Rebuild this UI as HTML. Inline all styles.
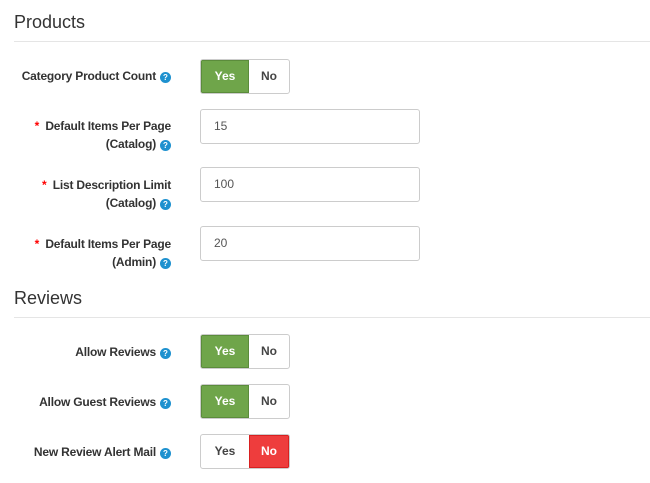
<!DOCTYPE html><html><head><style>
body{margin:0;background:#fff;font-family:"Liberation Sans",Arial,sans-serif;color:#333;width:650px;height:483px;position:relative;overflow:hidden}
.h{position:absolute;left:14px;font-size:18px;color:#333}
.hr{position:absolute;left:14px;right:0;height:1px;background:#e5e5e5}
.lab{position:absolute;right:479px;font-size:12px;font-weight:bold;text-align:right;line-height:18px;white-space:nowrap;letter-spacing:-0.2px}
.q{display:inline-block;width:11px;height:11px;border-radius:50%;background:#1e91cf;color:#fff;font-size:8px;line-height:11px;text-align:center;vertical-align:0px;margin-left:4px;letter-spacing:0}
.r{color:#f00;font-weight:bold}
.tg{position:absolute;left:200px;width:88px;height:33px;border:1px solid #ccc;border-radius:3px;overflow:hidden;display:flex;font-size:12px;font-weight:bold;color:#444}
.tg span{display:block;text-align:center;line-height:33px}
.y{width:48px}.n{width:40px}
.g{background:#6fa54a;color:#fff;box-shadow:inset 0 0 0 1px #5b8c3b}
.rd{background:#ee3d3d;color:#fff;box-shadow:inset 0 0 0 1px #d82020}
.in{position:absolute;left:200px;border:1px solid #ccc;border-radius:3px;font-size:12px;line-height:33px;padding-left:13px;box-sizing:border-box;width:220px;height:35px;color:#555}
</style></head><body>
<div class="h" style="top:12px">Products</div>
<div class="hr" style="top:41px"></div>
<div class="lab" style="top:67px">Category Product Count<span class="q">?</span></div>
<div class="tg" style="top:59px"><span class="y g">Yes</span><span class="n">No</span></div>
<div class="lab" style="top:117px"><span class="r">*</span>&nbsp; Default Items Per Page<br>(Catalog)<span class="q">?</span></div>
<div class="in" style="top:109px">15</div>
<div class="lab" style="top:176px"><span class="r">*</span>&nbsp; List Description Limit<br>(Catalog)<span class="q">?</span></div>
<div class="in" style="top:167px">100</div>
<div class="lab" style="top:235px"><span class="r">*</span>&nbsp; Default Items Per Page<br>(Admin)<span class="q">?</span></div>
<div class="in" style="top:226px">20</div>
<div class="h" style="top:288px">Reviews</div>
<div class="hr" style="top:317px"></div>
<div class="lab" style="top:343px">Allow Reviews<span class="q">?</span></div>
<div class="tg" style="top:334px"><span class="y g">Yes</span><span class="n">No</span></div>
<div class="lab" style="top:393px">Allow Guest Reviews<span class="q">?</span></div>
<div class="tg" style="top:384px"><span class="y g">Yes</span><span class="n">No</span></div>
<div class="lab" style="top:443px">New Review Alert Mail<span class="q">?</span></div>
<div class="tg" style="top:434px"><span class="y">Yes</span><span class="n rd">No</span></div>
</body></html>
